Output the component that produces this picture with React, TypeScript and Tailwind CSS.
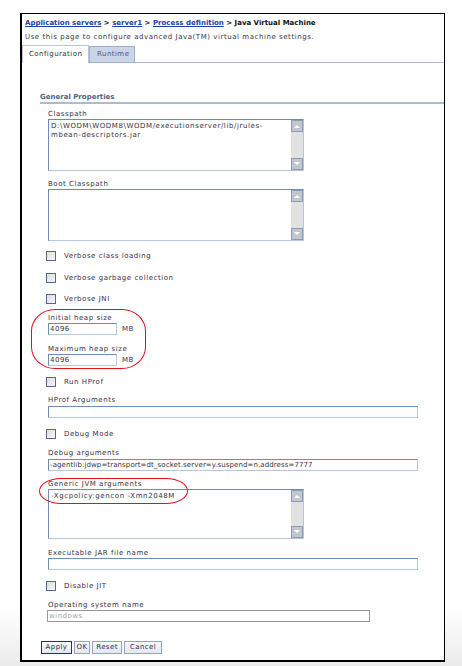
import React from 'react'

const font = "font-['DejaVu_Sans',sans-serif]"

function Label({ children }: { children: React.ReactNode }) {
  return <div className="h-[10px] text-[7px] tracking-[0.55px] leading-[10px] text-[#37313f] whitespace-nowrap">{children}</div>
}

function TextInput({ value, width, className = '' }: { value?: string; width: string; className?: string }) {
  return (
    <div
      className={`h-[12px] ${width} border border-t-[#6f8db3] border-l-[#6f8db3] border-r-[#b4c7de] border-b-[#b4c7de] bg-white pl-[1px] text-[7px] leading-[10px] text-[#37313f] whitespace-nowrap overflow-hidden ${className}`}
    >
      {value}
    </div>
  )
}

function ScrollArrow({ up }: { up?: boolean }) {
  return (
    <div className="h-[12px] w-[12px] flex items-center justify-center bg-[#c3c6cc] border border-[#8c9cb6]">
      <svg width="6" height="4" viewBox="0 0 6 4">
        {up ? <path d="M0 4 L3 1 L6 4 Z" fill="#fff" /> : <path d="M0 0 L3 3 L6 0 Z" fill="#fff" />}
      </svg>
    </div>
  )
}

function TextArea({ lines, height }: { lines: string[]; height: string }) {
  return (
    <div
      className={`flex ${height} w-[256px] border border-t-[#6f8db3] border-l-[#6f8db3] border-r-[#b4c7de] border-b-[#b4c7de] bg-white`}
    >
      <div className="flex-1 pl-[2px] pt-[2px] text-[7px] tracking-[0.6px] leading-[9px] text-[#37313f]">
        {lines.map((l) => (
          <div key={l} className="whitespace-nowrap">{l}</div>
        ))}
      </div>
      <div className="flex w-[12px] flex-col justify-between bg-[#e1e1e1]">
        <ScrollArrow up />
        <ScrollArrow />
      </div>
    </div>
  )
}

function Check({ label }: { label: string }) {
  return (
    <div className="-ml-[2px] flex h-[10px] items-center gap-[8px]">
      <div className="h-[10px] w-[10px] border border-[#52698c] bg-gradient-to-br from-[#dedede] to-[#f6f6f6]" />
      <span className="text-[7px] tracking-[0.55px] leading-[10px] text-[#37313f]">{label}</span>
    </div>
  )
}

function Btn({ children, primary, width }: { children: React.ReactNode; primary?: boolean; width: string }) {
  return (
    <div
      className={`flex h-[13px] ${width} items-center justify-center bg-gradient-to-b from-[#fafafa] to-[#e4e6ea] text-[7px] tracking-[0.4px] text-[#27304a] ${
        primary ? 'border-[1.5px] border-[#2a3550]' : 'border border-[#93a4c2]'
      }`}
    >
      {children}
    </div>
  )
}

export default function App() {
  return (
    <div className={`${font} h-[666px] w-[462px] bg-[linear-gradient(to_bottom,#ffffff_0%,#ffffff_91%,#ebebeb_100%)] pt-[13px]`}>
      <div className="ml-[20px] w-[425px] border-t border-r border-l-2 border-b-2 border-black bg-white pb-[6px]">
        {/* breadcrumb */}
        <div className="mt-[4px] h-[11px] pl-[3px] text-[7px] font-bold leading-[11px] text-[#111] whitespace-nowrap">
          <span className="text-[#2140a8] underline">Application servers</span>
          {' > '}
          <span className="text-[#2140a8] underline">server1</span>
          {' > '}
          <span className="text-[#2140a8] underline">Process definition</span>
          {' > Java Virtual Machine'}
        </div>
        <div className="mt-[3px] h-[11px] pl-[3px] text-[7px] tracking-[0.55px] leading-[11px] text-[#3a3344] whitespace-nowrap">
          Use this page to configure advanced Java(TM) virtual machine settings.
        </div>

        {/* tabs */}
        <div className="mt-[2px] flex h-[18px] items-end">
          <div className="flex h-[18px] w-[67px] items-center pl-[6px] border-t border-l border-r border-[#b9c7dc] text-[7px] tracking-[0.45px] text-[#2c2c34]">
            Configuration
          </div>
          <div className="flex h-[17px] w-[46px] items-center pl-[7px] border border-[#9eb0cb] bg-[#cbd4e6] text-[7px] tracking-[0.45px] text-[#4c5b7c]">
            Runtime
          </div>
          <div className="h-[18px] flex-1 border-b border-[#a9bad2]" />
        </div>

        {/* general properties heading */}
        <div className="mt-[29px] ml-[18px] h-[12px] border-b-2 border-[#a9bad2] text-[7px] font-bold leading-[10px] text-[#4f6186]">
          General Properties
        </div>

        <div className="ml-[26px] flex flex-col">
          <div className="mt-[5px]">
            <Label>Classpath</Label>
            <TextArea height="h-[52px]" lines={['D:\\WODM\\WODM8\\WODM/executionserver/lib/jrules-', 'mbean-descriptors.jar']} />
          </div>
          <div className="mt-[8px]">
            <Label>Boot Classpath</Label>
            <TextArea height="h-[52px]" lines={[]} />
          </div>

          <div className="mt-[10px]">
            <Check label="Verbose class loading" />
          </div>
          <div className="mt-[12px]">
            <Check label="Verbose garbage collection" />
          </div>
          <div className="mt-[11px]">
            <Check label="Verbose JNI" />
          </div>

          <div className="relative mt-[9px]">
            <div className="pointer-events-none absolute -left-[17px] -top-[4px] h-[60px] w-[115px] rounded-[24px/22px] border-[1.5px] border-[#e3101c]" />
            <Label>Initial heap size</Label>
            <div className="flex items-center gap-[5px]">
              <TextInput width="w-[69px]" value="4096" className="tracking-[0.5px]" />
              <span className="text-[7px] tracking-[0.5px] text-[#37313f]">MB</span>
            </div>
            <div className="mt-[9px]">
              <Label>Maximum heap size</Label>
            </div>
            <div className="flex items-center gap-[5px]">
              <TextInput width="w-[69px]" value="4096" className="tracking-[0.5px]" />
              <span className="text-[7px] tracking-[0.5px] text-[#37313f]">MB</span>
            </div>
          </div>

          <div className="mt-[11px]">
            <Check label="Run HProf" />
          </div>
          <div className="mt-[8px]">
            <Label>HProf Arguments</Label>
            <TextInput width="w-[370px]" className="mt-[1px]" />
          </div>

          <div className="mt-[11px]">
            <Check label="Debug Mode" />
          </div>
          <div className="mt-[9px]">
            <Label>Debug arguments</Label>
            <TextInput
              width="w-[370px]"
              className="mt-[1px] tracking-[0.1px]"
              value="-agentlib:jdwp=transport=dt_socket.server=y.suspend=n.address=7777"
            />
          </div>

          <div className="relative mt-[8px]">
            <div className="pointer-events-none absolute -left-[9px] -top-[1px] h-[26px] w-[149px] rounded-[22px/13px] border-[1.5px] border-[#e3101c]" />
            <Label>Generic JVM arguments</Label>
            <TextArea height="h-[50px]" lines={['-Xgcpolicy:gencon -Xmn2048M']} />
          </div>

          <div className="mt-[9px]">
            <Label>Executable JAR file name</Label>
            <TextInput width="w-[370px]" />
          </div>

          <div className="mt-[11px]">
            <Check label="Disable JIT" />
          </div>
          <div className="mt-[9px]">
            <Label>Operating system name</Label>
            <div className="-ml-[1px] h-[12px] w-[323px] border border-[#9a9a9a] bg-white pl-[1px] text-[7px] tracking-[0.5px] leading-[10px] text-[#a3a3a3]">
              windows
            </div>
          </div>
        </div>

        {/* buttons */}
        <div className="ml-[19px] mt-[19px] flex gap-[2px]">
          <Btn primary width="w-[31px]">Apply</Btn>
          <Btn width="w-[16px]">OK</Btn>
          <Btn width="w-[30px]">Reset</Btn>
          <Btn width="w-[38px]">Cancel</Btn>
        </div>
      </div>
    </div>
  )
}
